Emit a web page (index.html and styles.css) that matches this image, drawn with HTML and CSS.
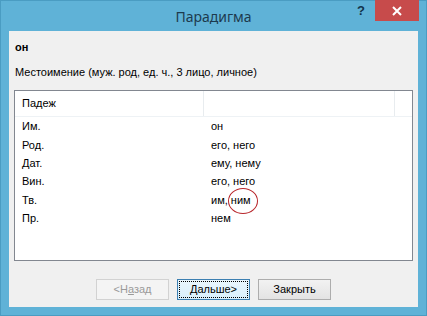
FILE: index.html
```html
<!DOCTYPE html>
<html lang="ru">
<head>
    <meta charset="UTF-8">
    <title>Парадигма</title>
    <link rel="stylesheet" href="styles.css">
</head>
<body>
    <div class="window">
        <div class="titlebar">
            <div class="title">Парадигма</div>
            <div class="help">?</div>
            <div class="close">
                <svg width="10" height="10" viewBox="0 0 10 10">
                    <path d="M1 1 L9 9 M9 1 L1 9" stroke="#fff" stroke-width="2"/>
                </svg>
            </div>
        </div>
        <div class="client">
            <div class="word">он</div>
            <div class="desc">Местоимение (муж. род, ед. ч., 3 лицо, личное)</div>
            <div class="listbox">
                <div class="lhead">
                    <div class="hcell c1">Падеж</div>
                    <div class="hcell c2"></div>
                    <div class="hcell c3"></div>
                </div>
                <div class="row"><div class="c1">Им.</div><div class="c2">он</div></div>
                <div class="row"><div class="c1">Род.</div><div class="c2">его, него</div></div>
                <div class="row"><div class="c1">Дат.</div><div class="c2">ему, нему</div></div>
                <div class="row"><div class="c1">Вин.</div><div class="c2">его, него</div></div>
                <div class="row"><div class="c1">Тв.</div><div class="c2">им, <span class="mark">ним</span></div></div>
                <div class="row"><div class="c1">Пр.</div><div class="c2">нем</div></div>
            </div>
            <div class="buttons">
                <div class="btn disabled">&lt;Н<u>а</u>зад</div>
                <div class="btn focused"><u>Д</u>альше&gt;</div>
                <div class="btn">Закрыть</div>
            </div>
        </div>
    </div>
</body>
</html>
```
FILE: styles.css
```css
*{
    margin: 0;
    padding: 0;
    box-sizing: border-box;
}

body{
    width: 427px;
    height: 316px;
    font-family: "Liberation Sans", Arial, sans-serif;
    font-size: 11px;
    color: #000;
    background-color: #5fb2d7;
}

.window {
    height: 316px;
    padding: 0 8px 8px;
    background-color: #5fb2d7;
    border: 1px solid #4a9cc2;
    display: flex;
    flex-direction: column;
}

.titlebar {
    height: 30px;
    display: flex;
    position: relative;
    justify-content: center;
}
.title {
    font-family: "Noto Sans", "Liberation Sans", sans-serif;
    font-size: 14px;
    color: #1d3a4e;
    padding-top: 6px;
}
.help {
    position: absolute;
    left: 348px;
    top: 2px;
    font-weight: bold;
    font-size: 13px;
    color: #12344a;
}
.close {
    position: absolute;
    right: -1px;
    top: -1px;
    width: 44px;
    height: 21px;
    background-color: #c74b4b;
    display: flex;
    align-items: center;
    justify-content: center;
}

.client {
    flex: 1;
    background-color: #f0f0f0;
    padding: 10px 5px 0 5px;
    display: flex;
    flex-direction: column;
}
.word {
    font-weight: bold;
    padding-left: 1px;
    height: 15px;
}
.desc {
    margin-top: 10px;
    padding-left: 1px;
    height: 15px;
}
.listbox {
    margin-top: 9px;
    height: 171px;
    background-color: #fff;
    border: 1px solid #828790;
}
.lhead {
    display: flex;
    height: 26px;
    border-bottom: 1px solid #eef2f5;
}
.hcell {
    padding-top: 6px;
    border-right: 1px solid #e8ecef;
}
.hcell.c3 {
    border-right: none;
    flex: 1;
}
.c1 {
    width: 189px;
    padding-left: 7px;
}
.c2 {
    width: 191px;
    padding-left: 7px;
}
.row {
    display: flex;
    height: 18.4px;
    align-items: center;
}
.row:first-of-type {
    margin-top: 1px;
}
.mark {
    position: relative;
}
.mark::after {
    content: "";
    position: absolute;
    left: -3px;
    top: -6px;
    width: 28px;
    height: 24px;
    border: 1px solid #b8262b;
    border-radius: 50%;
}

.buttons {
    display: flex;
    justify-content: center;
    gap: 8px;
    margin-top: 18px;
}
.btn {
    width: 73px;
    height: 21px;
    border: 1px solid #adadad;
    background: linear-gradient(#f2f2f2, #e3e3e3);
    text-align: center;
    line-height: 19px;
}
.btn.disabled {
    color: #9a9a9a;
    border-color: #d2d2d2;
    background: #f4f4f4;
}
.btn.focused {
    border-color: #3c7fb1;
    outline: 1px dotted #000;
    outline-offset: -3px;
    background: linear-gradient(#eaf6fd, #d9f0fc);
}
```
